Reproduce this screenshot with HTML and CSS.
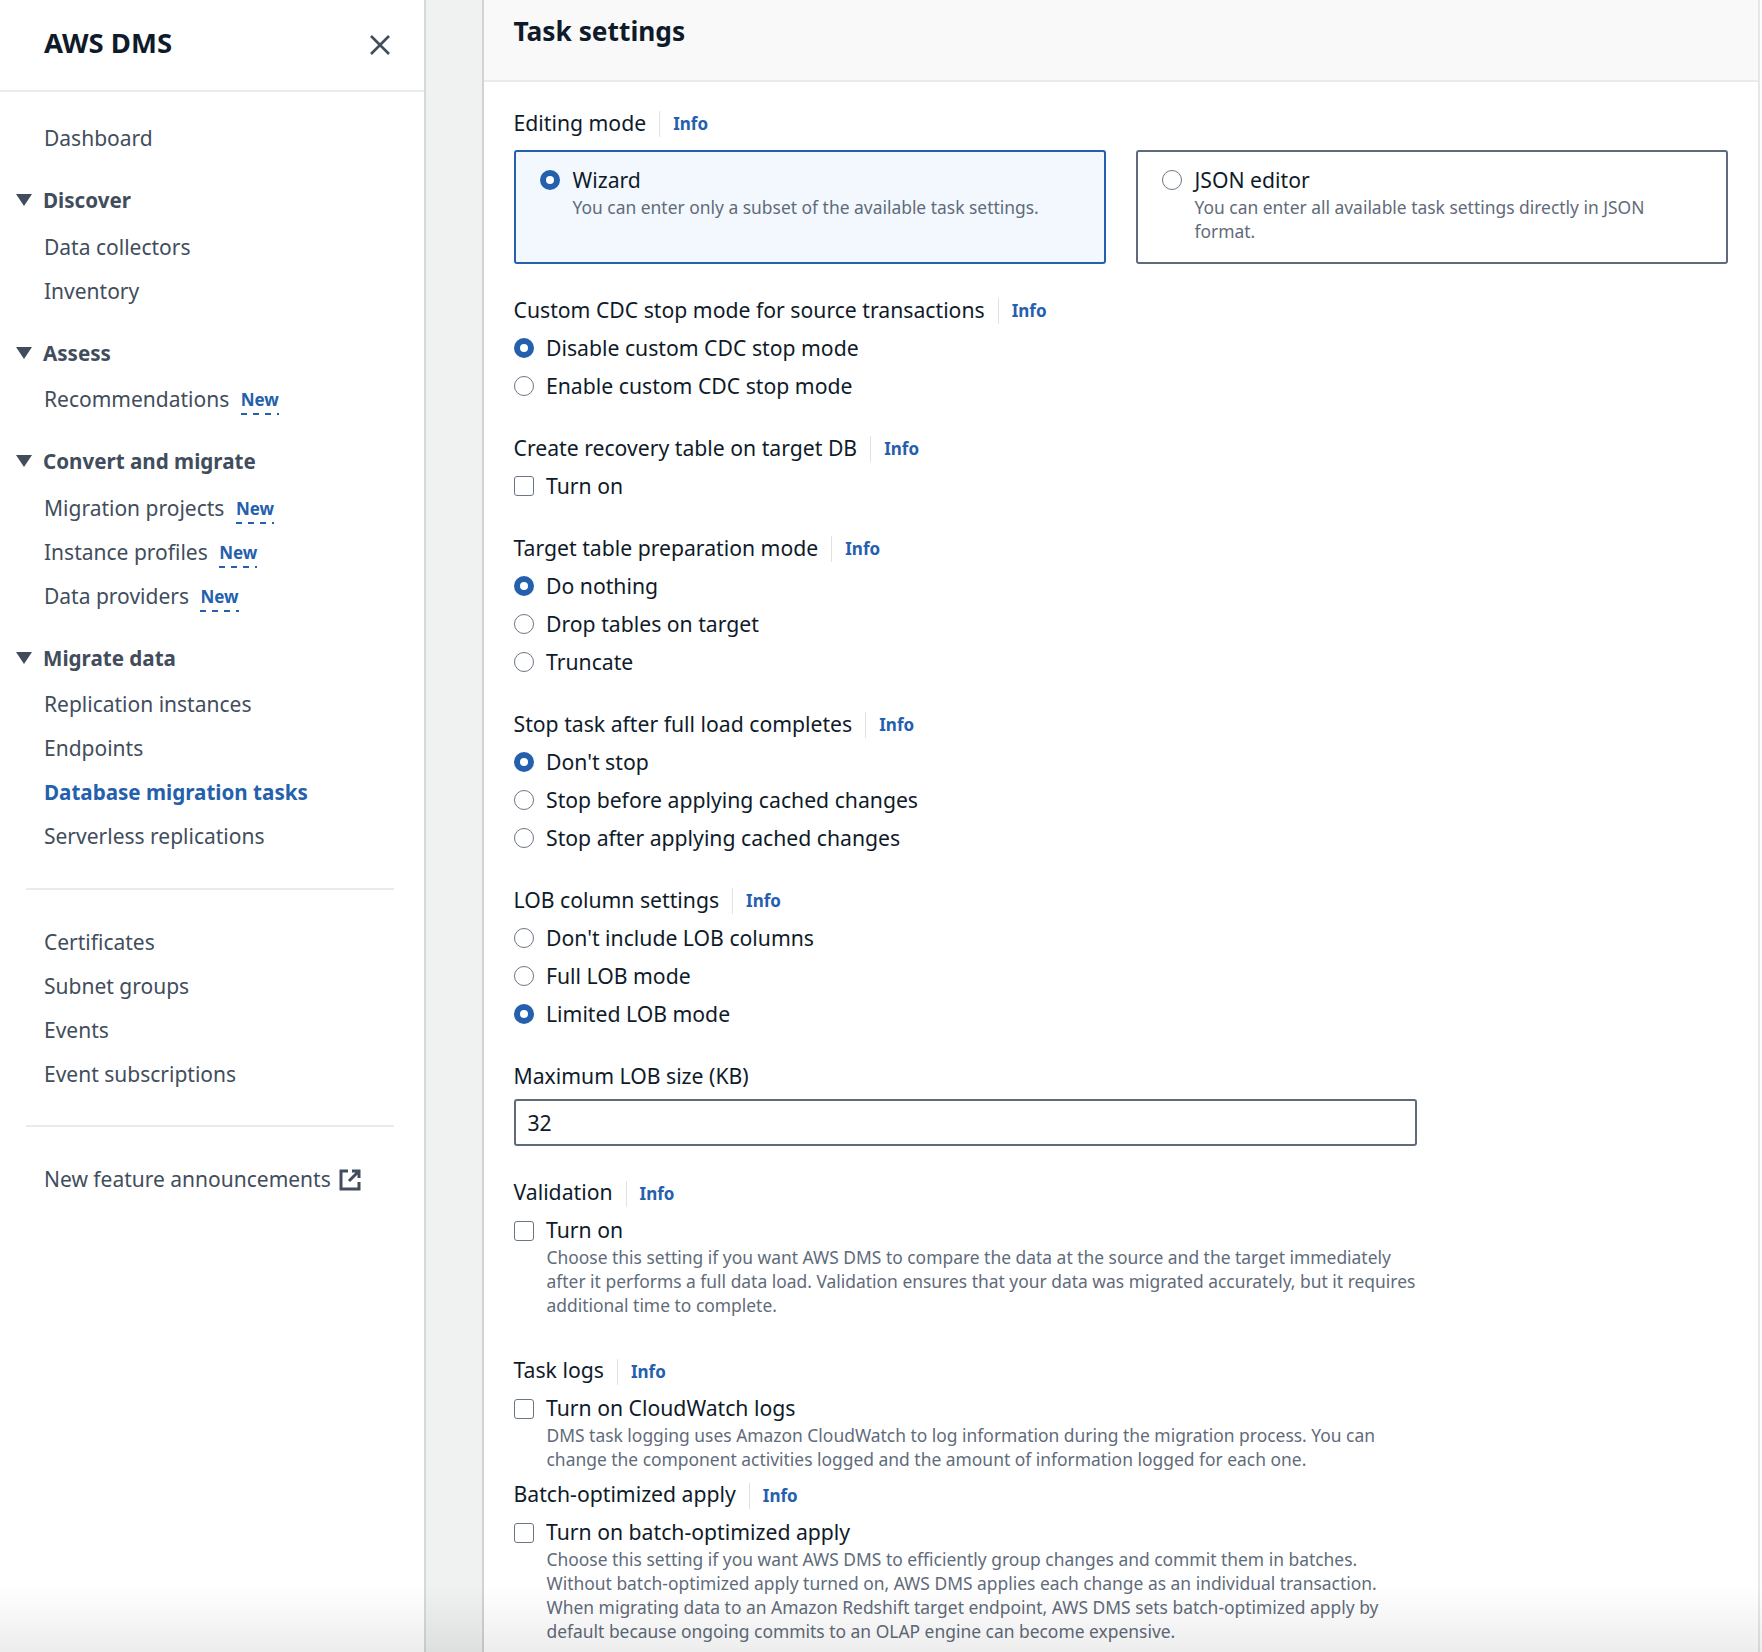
FILE: index.html
```html
<!DOCTYPE html>
<html lang="en">
<head>
<meta charset="utf-8">
<title>AWS DMS - Task settings</title>
<link rel="stylesheet" href="styles.css">
</head>
<body>
<div class="app">
  <aside class="side">
    <div class="side-head">
      <span class="brand">AWS DMS</span>
      <svg class="close" viewBox="0 0 24 24" aria-hidden="true"><path d="M3 3l18 18M21 3L3 21"/></svg>
    </div>
    <nav class="nav">
      <a class="item">Dashboard</a>
      <div class="group">
        <div class="group-head"><svg class="caret" viewBox="0 0 16 12" aria-hidden="true"><path d="M0 0h16L8 12z"/></svg>Discover</div>
        <a class="item">Data collectors</a>
        <a class="item">Inventory</a>
      </div>
      <div class="group">
        <div class="group-head"><svg class="caret" viewBox="0 0 16 12" aria-hidden="true"><path d="M0 0h16L8 12z"/></svg>Assess</div>
        <a class="item">Recommendations <span class="new">New</span></a>
      </div>
      <div class="group">
        <div class="group-head"><svg class="caret" viewBox="0 0 16 12" aria-hidden="true"><path d="M0 0h16L8 12z"/></svg>Convert and migrate</div>
        <a class="item">Migration projects <span class="new">New</span></a>
        <a class="item">Instance profiles <span class="new">New</span></a>
        <a class="item">Data providers <span class="new">New</span></a>
      </div>
      <div class="group">
        <div class="group-head"><svg class="caret" viewBox="0 0 16 12" aria-hidden="true"><path d="M0 0h16L8 12z"/></svg>Migrate data</div>
        <a class="item">Replication instances</a>
        <a class="item">Endpoints</a>
        <a class="item active">Database migration tasks</a>
        <a class="item">Serverless replications</a>
      </div>
      <hr class="rule">
      <a class="item">Certificates</a>
      <a class="item">Subnet groups</a>
      <a class="item">Events</a>
      <a class="item">Event subscriptions</a>
      <hr class="rule">
      <a class="item">New feature announcements
        <svg class="ext" viewBox="0 0 22 22" aria-hidden="true"><path d="M9 2H2v18h18v-7M13 2h7v7M20 2L10 12"/></svg>
      </a>
    </nav>
  </aside>

  <div class="gutter"></div>

  <main class="panel">
    <header class="panel-head"><h2>Task settings</h2></header>
    <div class="form">
      <section class="field has-cards">
        <div class="label">Editing mode<span class="info">Info</span></div>
        <div class="cards">
          <div class="card selected">
            <span class="radio on"></span>
            <div><div class="card-title">Wizard</div><div class="desc">You can enter only a subset of the available task settings.</div></div>
          </div>
          <div class="card">
            <span class="radio"></span>
            <div><div class="card-title">JSON editor</div><div class="desc">You can enter all available task settings directly in JSON<br>format.</div></div>
          </div>
        </div>
      </section>

      <section class="field">
        <div class="label">Custom CDC stop mode for source transactions<span class="info">Info</span></div>
        <div class="opt"><span class="radio on"></span>Disable custom CDC stop mode</div>
        <div class="opt"><span class="radio"></span>Enable custom CDC stop mode</div>
      </section>

      <section class="field">
        <div class="label">Create recovery table on target DB<span class="info">Info</span></div>
        <div class="opt"><span class="check"></span>Turn on</div>
      </section>

      <section class="field">
        <div class="label">Target table preparation mode<span class="info">Info</span></div>
        <div class="opt"><span class="radio on"></span>Do nothing</div>
        <div class="opt"><span class="radio"></span>Drop tables on target</div>
        <div class="opt"><span class="radio"></span>Truncate</div>
      </section>

      <section class="field">
        <div class="label">Stop task after full load completes<span class="info">Info</span></div>
        <div class="opt"><span class="radio on"></span>Don't stop</div>
        <div class="opt"><span class="radio"></span>Stop before applying cached changes</div>
        <div class="opt"><span class="radio"></span>Stop after applying cached changes</div>
      </section>

      <section class="field">
        <div class="label">LOB column settings<span class="info">Info</span></div>
        <div class="opt"><span class="radio"></span>Don't include LOB columns</div>
        <div class="opt"><span class="radio"></span>Full LOB mode</div>
        <div class="opt"><span class="radio on"></span>Limited LOB mode</div>
      </section>

      <section class="field has-input">
        <div class="label">Maximum LOB size (KB)</div>
        <div class="input">32</div>
      </section>

      <section class="field">
        <div class="label">Validation<span class="info">Info</span></div>
        <div class="opt"><span class="check"></span>Turn on</div>
        <p class="desc indent">Choose this setting if you want AWS DMS to compare the data at the source and the target immediately<br>after it performs a full data load. Validation ensures that your data was migrated accurately, but it requires<br>additional time to complete.</p>
      </section>

      <section class="field loose">
        <div class="label">Task logs<span class="info">Info</span></div>
        <div class="opt"><span class="check"></span>Turn on CloudWatch logs</div>
        <p class="desc indent">DMS task logging uses Amazon CloudWatch to log information during the migration process. You can<br>change the component activities logged and the amount of information logged for each one.</p>
      </section>

      <section class="field tight">
        <div class="label">Batch-optimized apply<span class="info">Info</span></div>
        <div class="opt"><span class="check"></span>Turn on batch-optimized apply</div>
        <p class="desc indent">Choose this setting if you want AWS DMS to efficiently group changes and commit them in batches.<br>Without batch-optimized apply turned on, AWS DMS applies each change as an individual transaction.<br>When migrating data to an Amazon Redshift target endpoint, AWS DMS sets batch-optimized apply by<br>default because ongoing commits to an OLAP engine can become expensive.</p>
      </section>
    </div>
  </main>
  <div class="edge"></div>
</div>
<div class="fade"></div>
</body>
</html>
```

FILE: styles.css
```css
* { box-sizing: border-box; }
html, body { margin: 0; height: 100%; overflow: hidden; background: #fff; }
body {
  font-family: "Noto Sans", "Liberation Sans", sans-serif;
  font-size: 21px;
  color: #0f1b2a;
}
.app { display: flex; height: 1652px; }

.side { width: 426px; flex: none; border-right: 2px solid #d5d9d9; background: #fff; }
.side-head {
  height: 92px;
  border-bottom: 2px solid #e9ebed;
  display: flex; align-items: center; justify-content: space-between;
  padding: 0 32px 6px 44px;
}
.brand { font-size: 27.5px; font-weight: 700; color: #0f1b2a; }
.close { width: 24px; height: 24px; margin-top: 6px; fill: none; stroke: #414d5c; stroke-width: 2.6; }

.nav { padding-top: 24px; }
.item {
  display: block; height: 44px; line-height: 44px;
  padding-left: 44px; color: #414d5c; white-space: nowrap;
}
.item.active { color: #2460ad; font-weight: 700; font-size: 20.6px; }
.group { margin-top: 16px; }
.group-head {
  height: 48.5px; line-height: 48px;
  display: flex; align-items: center;
  font-size: 20.6px; font-weight: 700; color: #414d5c;
}
.caret { width: 16px; height: 12px; margin: 0 11px 0 16px; fill: #414d5c; }
.new {
  display: inline-block; margin-left: 6px; padding-bottom: 2px;
  font-size: 17px; line-height: 26px; font-weight: 700; color: #2460ad;
  background: repeating-linear-gradient(to right, #2460ad 0 6px, transparent 6px 12px) left bottom / 100% 2px no-repeat;
  vertical-align: middle;
}
.rule { border: 0; height: 2px; background: #e9ebed; margin: 29.5px 30px 30px 26px; }
.ext { width: 22px; height: 22px; margin-left: 3px; vertical-align: -4px; fill: none; stroke: #414d5c; stroke-width: 3; }

.gutter { width: 58px; flex: none; background: #eff2f1; border-right: 2px solid #cfd3d3; }

.panel { flex: 1; min-width: 0; border-right: 2px solid #e6e8e8; font-size: 21.2px; }
.panel-head { height: 82px; background: #f9f9f9; border-bottom: 2px solid #e9ebed; padding: 12px 29.5px 0; }
.panel-head h2 { margin: 0; font-size: 26.3px; line-height: 38px; font-weight: 700; color: #0f1b2a; }
.edge { width: 2px; flex: none; background: #fff; }

.form { padding: 22px 30px 0 29.5px; }
.field { margin-bottom: 24px; }
.field.has-cards { margin-bottom: 27px; }
.field.has-input { margin-bottom: 27.5px; }
.field.loose { margin-top: 35px; }
.field.tight { margin-top: -19px; }
.label { height: 38px; padding-bottom: 2px; display: flex; align-items: center; color: #0f1b2a; white-space: nowrap; }
.info {
  margin-left: 13px; margin-top: 4px; padding-left: 13px;
  border-left: 1px solid #e0e3e5;
  line-height: 26px;
  font-size: 17px; font-weight: 700; color: #2460ad;
}
.opt { height: 38px; padding-bottom: 2px; display: flex; align-items: center; gap: 12.5px; white-space: nowrap; }
.opt .radio, .opt .check { margin-top: 2px; }
.radio {
  width: 20px; height: 20px; flex: none; border-radius: 50%;
  border: 1.5px solid #6b7684; background: #fff;
}
.radio.on { border: 6px solid #2460ad; }
.check { width: 20px; height: 20px; flex: none; border-radius: 3px; border: 1.5px solid #6b7684; background: #fff; }
.desc { font-size: 17.43px; line-height: 24px; color: #5f6b7a; white-space: nowrap; margin: 0; }
.desc.indent { padding-left: 33px; margin-top: -5px; }

.cards { display: flex; gap: 30px; margin-top: 8px; width: 1214px; }
.card {
  flex: 1; height: 114px; display: flex; gap: 12.5px;
  border: 2px solid #5f6b7a; border-radius: 3px; padding: 13px 24.5px; background: #fff;
}
.card .radio { margin-top: 5px; }
.card.selected { border-color: #2460ad; background: #f2f8fd; }
.card-title { line-height: 30px; }

.input {
  width: 903px; height: 47px; line-height: 43px; margin-top: 4px;
  border: 2px solid #5f6b7a; border-radius: 3px; padding-left: 12px;
}
.fade {
  position: fixed; left: 0; right: 0; bottom: 0; height: 66px;
  background: linear-gradient(to bottom, rgba(0,0,0,0), rgba(0,0,0,.07));
  pointer-events: none;
}
```
